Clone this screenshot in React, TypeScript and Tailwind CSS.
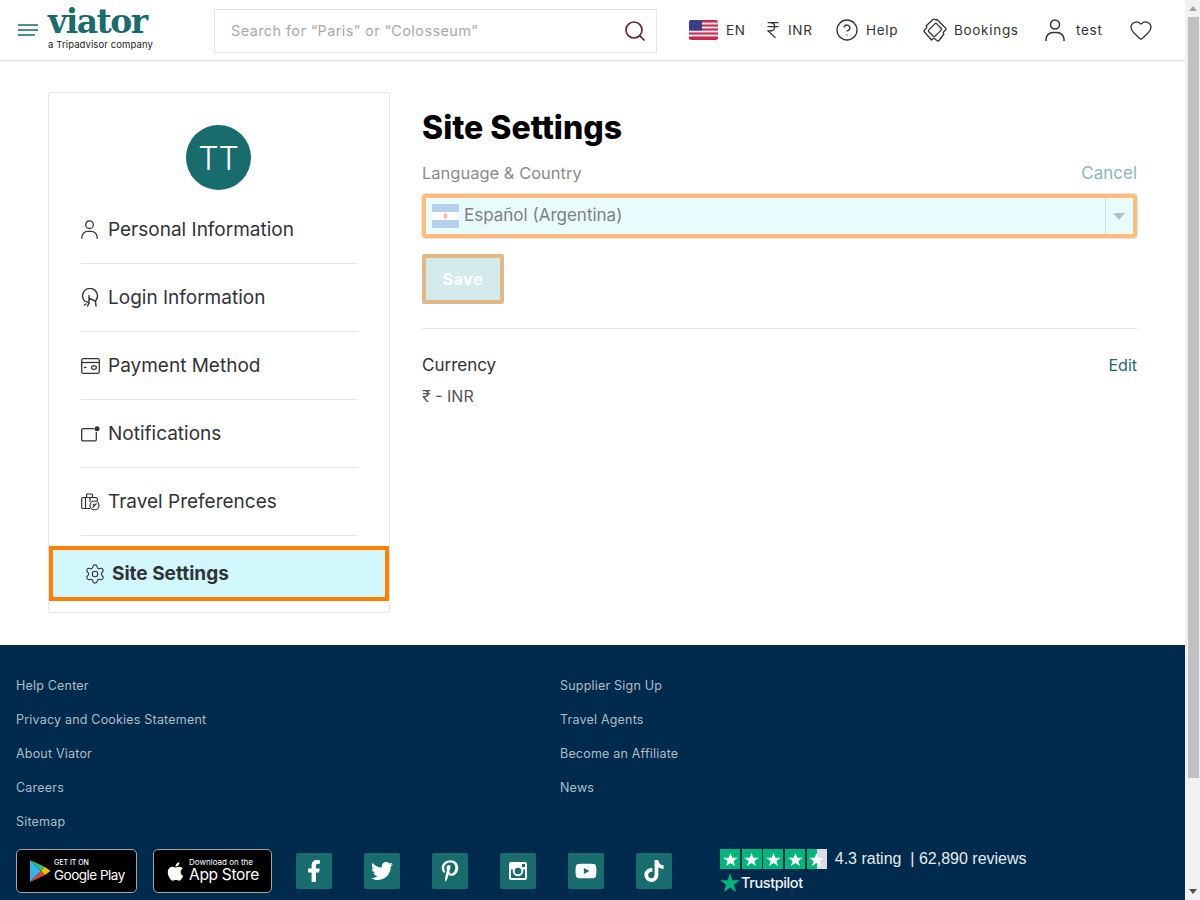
import { Search, Heart, CircleHelp, Settings, IndianRupee } from 'lucide-react';
import { FaFacebookF, FaTwitter, FaPinterestP, FaYoutube, FaTiktok, FaApple } from 'react-icons/fa';

const sans = "font-['Inter','Noto_Sans',sans-serif]";

function UsFlag() {
  return (
    <svg width="29" height="20" viewBox="0 0 29 20" className="shrink-0">
      <rect width="29" height="20" rx="2.5" fill="#e8e8ee" />
      <path d="M0 2.5A2.5 2.5 0 0 1 2.5 0h24A2.5 2.5 0 0 1 29 2.5H0Z" fill="#c8284a" />
      <rect y="4.5" width="29" height="2" fill="#c8284a" />
      <rect y="8.5" width="29" height="2" fill="#c8284a" />
      <rect y="12.5" width="29" height="2" fill="#c8284a" />
      <path d="M0 16.5h29v1A2.5 2.5 0 0 1 26.5 20h-24A2.5 2.5 0 0 1 0 17.5v-1Z" fill="#c8284a" />
      <path d="M0 2.5A2.5 2.5 0 0 1 2.5 0H13v10.5H0V2.5Z" fill="#3a3f86" />
    </svg>
  );
}

function BookingsIcon() {
  return (
    <svg width="24" height="24" viewBox="0 0 24 24" fill="none" stroke="#333" strokeWidth="1.3" className="shrink-0">
      <path d="M14 1.5 22.5 10a1.5 1.5 0 0 1 0 2L20.8 13.7a1.8 1.8 0 0 0 0 2.5l-4.8 6.3a1.5 1.5 0 0 1-2 0L12 21a1.8 1.8 0 0 0-2.5 0L8.5 22 1.5 14a1.5 1.5 0 0 1 0-2l1.7-1.7a1.8 1.8 0 0 0 0-2.5L10 1.5a1.5 1.5 0 0 1 2 0l.3.3a1.3 1.3 0 0 0 1.7-.3Z" />
      <rect x="7.6" y="6.4" width="8.8" height="11.2" rx="1" transform="rotate(45 12 12)" />
    </svg>
  );
}

function PersonIcon({ size }: { size: number }) {
  return (
    <svg width={size} height={size * 1.1} viewBox="0 0 20 22" fill="none" stroke="#333" strokeWidth="1.500" strokeLinecap="round" className="shrink-0">
      <circle cx="10" cy="5.500" r="4.500" />
      <path d="M1 21.500v-1.500a7 7 0 0 1 7-6.500h4a7 7 0 0 1 7 6.500v1.500" />
    </svg>
  );
}

function LoginIcon() {
  return (
    <svg width="18" height="20" viewBox="0 0 18 20" fill="none" stroke="#333" strokeWidth="1.4" strokeLinecap="round">
      <path d="M4 13.500A7.500 7.500 0 1 1 14.500 13" />
      <path d="M8 7.500V15l-2.500-1.500M8 15l-1.500 3M8 10.500l3 1 3.500 2 .5 4.500M5 16l-1.500 1" />
    </svg>
  );
}

function PaymentIcon() {
  return (
    <svg width="19" height="16" viewBox="0 0 19 16" fill="none" stroke="#333" strokeWidth="1.3">
      <rect x="0.700" y="0.700" width="17.600" height="14.600" rx="1.500" />
      <path d="M1 4.500h17" />
      <path d="M3 9.500h2.500" />
      <rect x="10.500" y="7.800" width="5" height="3.500" rx="1.700" />
    </svg>
  );
}

function NotificationIcon() {
  return (
    <svg width="19" height="16" viewBox="0 0 19 16" fill="none" stroke="#333" strokeWidth="1.3">
      <path d="M13 2.700H2a1.300 1.300 0 0 0-1.300 1.300v9.500A1.300 1.300 0 0 0 2 14.800h12a1.300 1.300 0 0 0 1.300-1.300V6" />
      <circle cx="16" cy="2.700" r="2.500" fill="#333" stroke="none" />
    </svg>
  );
}

function TravelIcon() {
  return (
    <svg width="19" height="18" viewBox="0 0 19 18" fill="none" stroke="#333" strokeWidth="1.2">
      <path d="M9 15.500H2a1.300 1.300 0 0 1-1.300-1.300V5.800A1.300 1.300 0 0 1 2 4.500h13a1.300 1.300 0 0 1 1.300 1.300V8" />
      <path d="M5.500 4.500V2a1 1 0 0 1 1-1h4a1 1 0 0 1 1 1v2.500M4.500 4.500v11M9 4.500V9" />
      <circle cx="13.500" cy="12.500" r="4.500" fill="#fff" />
      <path d="m11.500 14.500 4-4M12 11l1.500 1.500" />
    </svg>
  );
}

function InstagramIcon() {
  return (
    <svg width="18" height="18" viewBox="0 0 18 18">
      <path fillRule="evenodd" fill="#fff" d="M2 0h14a2 2 0 0 1 2 2v14a2 2 0 0 1-2 2H2a2 2 0 0 1-2-2V2a2 2 0 0 1 2-2Zm0 7.500V15.500a.5.5 0 0 0 .5.5h13a.5.5 0 0 0 .5-.5V7.500h-1.900a5.300 5.300 0 1 1-10.200 0H2ZM9 5.700a3.300 3.300 0 1 0 0 6.600 3.300 3.300 0 0 0 0-6.600ZM13 2v3h3V2h-3Z" />
    </svg>
  );
}

function NavRow({ icon, label }: { icon: React.ReactNode; label: string }) {
  return (
    <div className="h-[68px] flex items-center border-b border-[#e5e5e5] mx-8">
      <span className="w-[27px] shrink-0 flex items-center">{icon}</span>
      <span className="pt-[2px] text-[19px] text-[#2f3338]">{label}</span>
    </div>
  );
}

function Social({ children }: { children: React.ReactNode }) {
  return <div className="w-9 h-9 rounded-[2px] bg-[#186c6e] flex items-center justify-center text-white text-[22px]">{children}</div>;
}

function TpStar({ half }: { half?: boolean }) {
  return (
    <div className={`w-5 h-5 flex items-center justify-center ${half ? 'bg-[linear-gradient(90deg,#00b67a_50%,#dcdce6_50%)]' : 'bg-[#00b67a]'}`}>
      <svg width="15" height="15" viewBox="0 0 24 24" fill="#fff">
        <path d="m12 1.500 3 7.800h8.500l-6.800 5.200 2.500 8-7.200-5-7.200 5 2.500-8L.5 9.300H9Z" />
      </svg>
    </div>
  );
}

const leftLinks = ['Help Center', 'Privacy and Cookies Statement', 'About Viator', 'Careers', 'Sitemap'];
const rightLinks = ['Supplier Sign Up', 'Travel Agents', 'Become an Affiliate', 'News'];

export default function App() {
  return (
    <div className={`h-[900px] w-full flex overflow-hidden bg-white ${sans}`}>
      <div className="w-[1185px] shrink-0 flex flex-col">
        {/* top bar */}
        <header className="h-[61px] shrink-0 flex items-center border-b border-[#e2e2e2] shadow-[0_1px_2px_rgba(0,0,0,0.06)]">
          <div className="w-[20px] ml-[18px] flex flex-col gap-[3px]">
            <span className="h-[2px] bg-[#4d8f92]" />
            <span className="h-[2px] bg-[#4d8f92]" />
            <span className="h-[2px] bg-[#4d8f92] w-[17px]" />
          </div>
          <div className="ml-[10px] w-[156px] flex flex-col">
            <span className="font-['DejaVu_Serif',serif] font-bold text-[33px] leading-[26px] tracking-[-1.500px] text-[#186c6e]">viator</span>
            <span className="text-[9.500px] leading-[14px] tracking-[0.1px] text-[#222] mt-[3px]">a Tripadvisor company</span>
          </div>
          <div className="ml-[10px] mt-[2px] w-[443px] h-[44px] border border-[#e5e5e5] flex items-center justify-between pl-4 pr-[9px]">
            <span className="text-[14.500px] tracking-[0.4px] text-[#a9a9a9]">Search for “Paris” or “Colosseum”</span>
            <Search size={24} strokeWidth={1.7} className="text-[#6a2138]" />
          </div>
          <div className="ml-8 flex items-center text-[13.500px] tracking-[0.7px] text-[#333]">
            <UsFlag />
            <span className="ml-2 w-[37px]">EN</span>
            <IndianRupee size={20} strokeWidth={1.5} />
            <span className="ml-[5px] w-[47px]">INR</span>
            <CircleHelp size={24} strokeWidth={1.3} />
            <span className="ml-[7px] w-[57px]">Help</span>
            <BookingsIcon />
            <span className="ml-[7px] w-[91px]">Bookings</span>
            <PersonIcon size={20} />
            <span className="ml-[11px] w-[53px]">test</span>
            <Heart size={24} strokeWidth={1.3} />
          </div>
        </header>

        {/* account page */}
        <main className="flex-1 flex gap-8 pl-12 pr-12 pt-[31px]">
          <aside className="w-[342px] h-[521px] shrink-0 border border-[#e5e5e5] rounded-[3px]">
            <div className="mt-8 ml-[137px] w-[65px] h-[65px] pt-[2px] rounded-full bg-[#186c6e] text-white text-[32px] font-light flex items-center justify-center">TT</div>
            <div className="mt-[6px]">
              <NavRow icon={<PersonIcon size={17} />} label="Personal Information" />
              <NavRow icon={<LoginIcon />} label="Login Information" />
              <NavRow icon={<PaymentIcon />} label="Payment Method" />
              <NavRow icon={<NotificationIcon />} label="Notifications" />
              <NavRow icon={<TravelIcon />} label="Travel Preferences" />
            </div>
            <div className="mt-[10px] h-[55px] border-4 border-[#ff7f00] bg-[#d2f7fb] flex items-center pl-[31px]">
              <Settings size={22} strokeWidth={1.2} color="#333" />
              <span className="ml-[6px] pt-[2px] text-[19px] font-bold text-[#2f3338]">Site Settings</span>
            </div>
          </aside>

          <section className="w-[715px]">
            <h1 className="text-[32px] leading-[48px] font-extrabold text-black mt-[12px]">Site Settings</h1>
            <div className="mt-[8px] flex items-center justify-between text-[16.500px] leading-[26px]">
              <span className="text-[#8c8c8c]">Language &amp; Country</span>
              <span className="text-[#8ab8b8] text-[17px]">Cancel</span>
            </div>
            <div className="mt-[8px] h-[44px] rounded-[3px] border-4 border-[#fdbb7c] bg-[#e8fcfe] outline outline-1 outline-[#e4e4e4] flex items-center pl-[6px] pr-[1px]">
              <svg width="27" height="24" viewBox="0 0 27 24" className="shrink-0">
                <rect width="27" height="8" fill="#b7d0ec" />
                <rect y="8" width="27" height="8" fill="#fff" />
                <rect y="16" width="27" height="8" fill="#b7d0ec" />
                <ellipse cx="13.500" cy="12" rx="2" ry="3" fill="#edc79b" />
              </svg>
              <span className="ml-[5px] flex-1 text-[17px] text-[#808080]">Español (Argentina)</span>
              <div className="w-[27px] h-full border-l border-[#dcdcdc] flex items-center justify-center">
                <span className="w-0 h-0 border-l-[6px] border-r-[6px] border-t-[7px] border-l-transparent border-r-transparent border-t-[#bdbdbd]" />
              </div>
            </div>
            <div className="mt-4 w-[82px] h-[50px] rounded-[2px] border-4 border-[#e3b887] bg-[#d3ebec] flex items-center justify-center text-white text-[16px] font-bold tracking-[0.6px]">Save</div>
            <div className="mt-6 border-t border-[#e5e5e5] pt-[23px] flex items-center justify-between text-[17px] leading-[26px]">
              <span className="text-[#2f3338]">Currency</span>
              <span className="text-[#186c6e] text-[16px]">Edit</span>
            </div>
            <div className="mt-[5px] text-[16px] leading-[26px] text-[#555]">₹ - INR</div>
          </section>
        </main>

        {/* footer */}
        <footer className="h-[255px] shrink-0 bg-[#002b4d] px-4 pt-[32px]">
          <div className="flex h-[172px] text-[12.500px] leading-[18px] tracking-[0.2px] text-[#aebdc9]">
            <div className="w-[544px] flex flex-col gap-4">
              {leftLinks.map((link) => <span key={link}>{link}</span>)}
            </div>
            <div className="flex flex-col gap-4">
              {rightLinks.map((link) => <span key={link}>{link}</span>)}
            </div>
          </div>
          <div className="flex items-start">
            <div className="w-[121px] h-[44px] rounded-[5px] border border-[#a6a6a6] bg-black flex items-center pl-[12px] text-white">
              <svg width="22" height="24" viewBox="0 0 22 24" className="shrink-0">
                <path d="M1 1v22l11-11Z" fill="#2fb6ec" />
                <path d="M1 1l11 11 4-4Z" fill="#32c17b" />
                <path d="M1 23l11-11 4 4Z" fill="#ea4335" />
                <path d="m16 8-4 4 4 4 5.500-4Z" fill="#fbbc04" />
              </svg>
              <div className="ml-[3px] flex flex-col">
                <span className="text-[7px] leading-[8px] font-medium">GET IT ON</span>
                <span className="text-[13.500px] leading-[17px] tracking-[-0.5px] whitespace-nowrap">Google Play</span>
              </div>
            </div>
            <div className="ml-4 w-[119px] h-[44px] rounded-[5px] border border-[#a6a6a6] bg-black flex items-center pl-[11px] text-white">
              <FaApple className="text-[21px] shrink-0" />
              <div className="ml-[3px] flex flex-col">
                <span className="text-[8px] leading-[8px] whitespace-nowrap">Download on the</span>
                <span className="text-[15.500px] leading-[18px] tracking-[-0.3px] whitespace-nowrap">App Store</span>
              </div>
            </div>
            <div className="ml-6 mt-1 flex gap-8">
              <Social><FaFacebookF /></Social>
              <Social><FaTwitter /></Social>
              <Social><FaPinterestP /></Social>
              <Social><InstagramIcon /></Social>
              <Social><FaYoutube /></Social>
              <Social><FaTiktok /></Social>
            </div>
            <div className="ml-12 -mt-[2px] font-['Liberation_Sans',sans-serif] text-white">
              <div className="flex items-center">
                <div className="flex gap-[1.700px]">
                  <TpStar />
                  <TpStar />
                  <TpStar />
                  <TpStar />
                  <TpStar half />
                </div>
                <span className="ml-2 text-[16px] whitespace-pre text-[#e6eaee]">4.3 rating  | 62,890 reviews</span>
              </div>
              <div className="mt-[1px] flex items-center">
                <svg width="20" height="19" viewBox="0 0 24 23" fill="#00b67a">
                  <path d="m12 0 2.800 8.700H24l-7.400 5.400 2.800 8.900L12 17.500 4.600 23l2.800-8.900L0 8.700h9.200Z" />
                </svg>
                <span className={`ml-[1px] text-[14.500px] font-medium tracking-[-0.4px] text-[#f1f1f1] ${sans}`}>Trustpilot</span>
              </div>
            </div>
          </div>
        </footer>
      </div>

      {/* window scrollbar */}
      <div className="w-[15px] shrink-0 bg-[#f1f1f1] flex flex-col items-center">
        <div className="h-[17px] flex items-center">
          <span className="w-0 h-0 border-l-[4px] border-r-[4px] border-b-[5px] border-l-transparent border-r-transparent border-b-[#a3a3a3]" />
        </div>
        <div className="w-[11px] h-[761px] bg-[#c1c1c1] ml-[1px]" />
        <div className="flex-1" />
        <div className="h-[17px] flex items-center">
          <span className="w-0 h-0 border-l-[4px] border-r-[4px] border-t-[5px] border-l-transparent border-r-transparent border-t-[#505050]" />
        </div>
      </div>
    </div>
  );
}
